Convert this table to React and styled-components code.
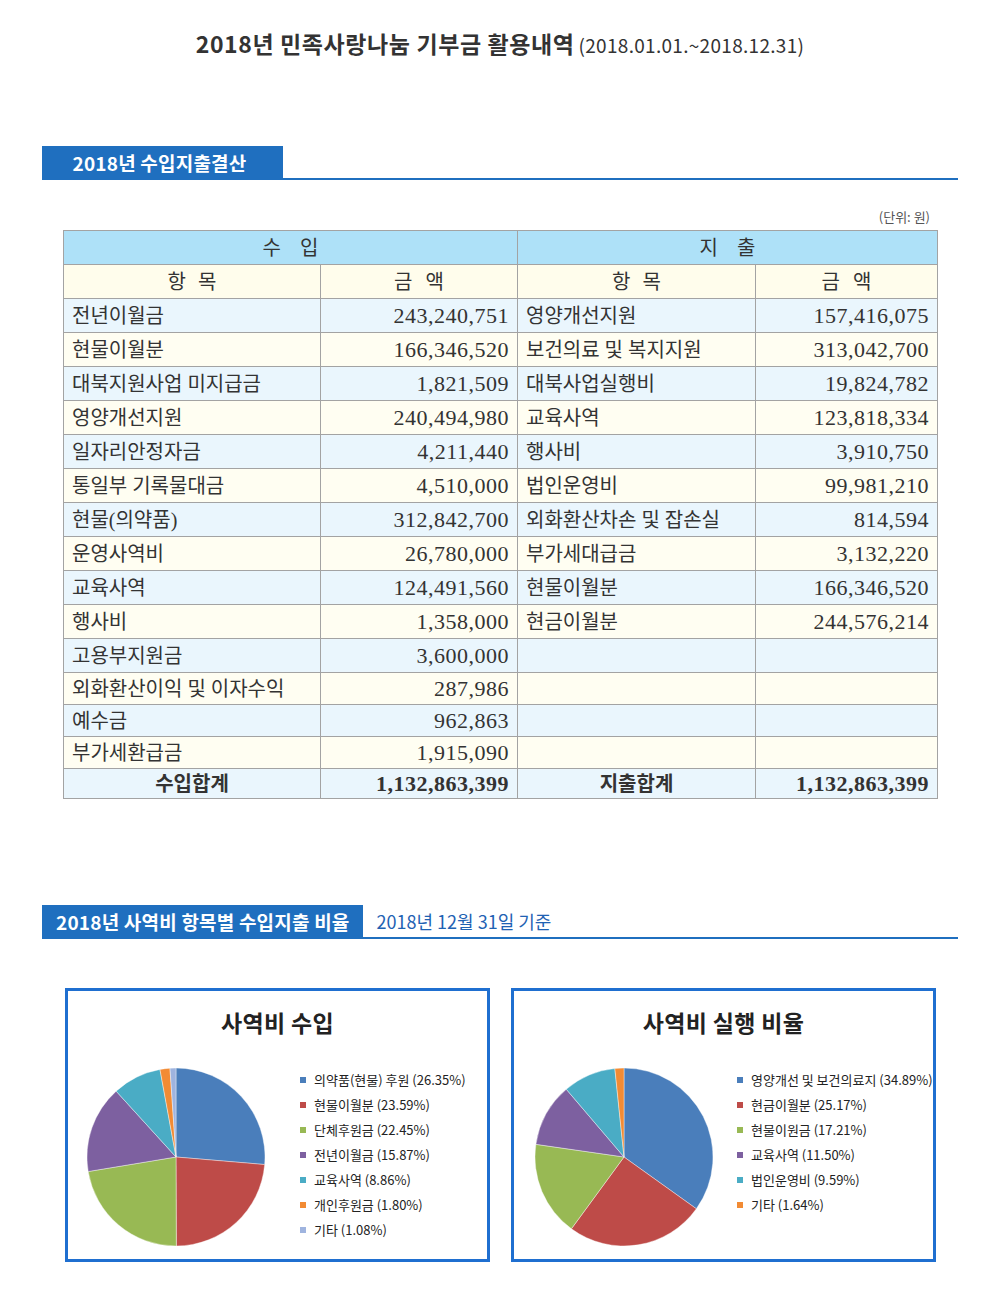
import React from "react";
import styled, { createGlobalStyle } from "styled-components";

const GlobalStyle = createGlobalStyle`
  html, body { margin: 0; padding: 0; background: #fff; }
  body { font-family: "Noto Sans CJK KR", "Noto Sans", sans-serif; color: #333; }
`;

const Page = styled.div`
  width: 1000px;
  height: 1295px;
  padding-top: 28px;
  box-sizing: border-box;
  background: #fff;
`;

const Title = styled.h1`
  margin: 0;
  height: 30px;
  text-align: center;
  font-size: 23px;
  line-height: 30px;
  font-weight: 700;
  color: #333;
  letter-spacing: 0.6px;
  white-space: nowrap;
`;

const TitleDate = styled.span`
  font-size: 19px;
  font-weight: 400;
  margin-left: 4px;
  letter-spacing: 0.3px;
  line-height: 1;
  vertical-align: baseline;
`;

const SectionHead = styled.div`
  display: flex;
  align-items: center;
  margin: ${(p) => p.$top}px 42px 0;
  border-bottom: 2px solid #1f6fbf;
`;

const SectionLabel = styled.div`
  height: 32px;
  width: ${(p) => (p.$width ? `${p.$width}px` : "auto")};
  padding: ${(p) => (p.$width ? "0 6px 0 0" : "0 13px 0 14px")};
  box-sizing: border-box;
  display: flex;
  align-items: center;
  justify-content: center;
  background: #1f6fbf;
  color: #fff;
  font-size: 19px;
  font-weight: 700;
  letter-spacing: 0.2px;
  white-space: nowrap;
`;

const SectionNote = styled.div`
  margin-left: 14px;
  color: #1f62b3;
  font-size: 18px;
  white-space: nowrap;
`;

const Unit = styled.div`
  margin: 29px 70px 0 0;
  text-align: right;
  font-size: 13px;
  line-height: 16px;
  color: #555;
`;

const TableWrap = styled.div`
  margin: 5px 0 0 63px;
`;

const Table = styled.table`
  width: 874px;
  border-collapse: collapse;
  table-layout: fixed;
  font-family: "Liberation Serif", "Noto Sans CJK KR", serif;
  color: #333;
`;

const Row = styled.tr`
  background: ${(p) =>
    p.$tone === "group" ? "#aee1f8" : p.$tone === "head" ? "#fffdec" : p.$tone === "blue" ? "#eaf6fd" : "#fffef2"};
`;

const Cell = styled.td`
  border: 1px solid #a3a3a3;
  height: ${(p) => p.$h}px;
  padding: 0 8px;
  box-sizing: border-box;
  font-size: ${(p) => (p.$num ? "22px" : "20px")};
  letter-spacing: ${(p) => (p.$num ? "0.5px" : "0")};
  text-align: ${(p) => (p.$num ? "right" : p.$center ? "center" : "left")};
  font-weight: ${(p) => (p.$bold ? 700 : 400)};
  word-spacing: ${(p) => (p.$ws ? `${p.$ws}px` : "normal")};
  white-space: nowrap;
  line-height: 1;
`;

const ChartRow = styled.div`
  display: flex;
  gap: 21px;
  margin: 49px 0 0 65px;
`;

const ChartBox = styled.div`
  width: 425px;
  height: 274px;
  box-sizing: border-box;
  border: 3px solid #1f6fd0;
  padding: 16px 0 0 ${(p) => p.$padLeft}px;
`;

const ChartTitle = styled.div`
  margin-left: -${(p) => p.$padLeft}px;
  text-align: center;
  font-size: 23px;
  line-height: 30px;
  font-weight: 700;
  color: #222;
  letter-spacing: 0.3px;
`;

const ChartBody = styled.div`
  display: flex;
  align-items: flex-start;
  margin-top: 30px;
`;

const Legend = styled.ul`
  list-style: none;
  margin: 0 0 0 ${(p) => p.$gap}px;
  padding: 0;
`;

const LegendItem = styled.li`
  display: flex;
  align-items: center;
  height: 25px;
  font-size: 13px;
  color: #222;
  white-space: nowrap;
`;

const Swatch = styled.span`
  width: 6px;
  height: 6px;
  background: ${(p) => p.$color};
  margin-right: 8px;
  flex: none;
`;

const income = [
  ["전년이월금", "243,240,751"],
  ["현물이월분", "166,346,520"],
  ["대북지원사업 미지급금", "1,821,509"],
  ["영양개선지원", "240,494,980"],
  ["일자리안정자금", "4,211,440"],
  ["통일부 기록물대금", "4,510,000"],
  ["현물(의약품)", "312,842,700"],
  ["운영사역비", "26,780,000"],
  ["교육사역", "124,491,560"],
  ["행사비", "1,358,000"],
  ["고용부지원금", "3,600,000"],
  ["외화환산이익 및 이자수익", "287,986"],
  ["예수금", "962,863"],
  ["부가세환급금", "1,915,090"],
];

const expense = [
  ["영양개선지원", "157,416,075"],
  ["보건의료 및 복지지원", "313,042,700"],
  ["대북사업실행비", "19,824,782"],
  ["교육사역", "123,818,334"],
  ["행사비", "3,910,750"],
  ["법인운영비", "99,981,210"],
  ["외화환산차손 및 잡손실", "814,594"],
  ["부가세대급금", "3,132,220"],
  ["현물이월분", "166,346,520"],
  ["현금이월분", "244,576,214"],
];

const C = {
  blue: "#4a7ebb",
  red: "#be4b48",
  green: "#98b954",
  purple: "#7d60a0",
  teal: "#4aacc5",
  orange: "#f28b34",
  lav: "#9fb4df",
};

const incomePie = [
  ["의약품(현물) 후원 (26.35%)", 26.35, C.blue],
  ["현물이월분 (23.59%)", 23.59, C.red],
  ["단체후원금 (22.45%)", 22.45, C.green],
  ["전년이월금 (15.87%)", 15.87, C.purple],
  ["교육사역 (8.86%)", 8.86, C.teal],
  ["개인후원금 (1.80%)", 1.8, C.orange],
  ["기타 (1.08%)", 1.08, C.lav],
];

const expensePie = [
  ["영양개선 및 보건의료지 (34.89%)", 34.89, C.blue],
  ["현금이월분 (25.17%)", 25.17, C.red],
  ["현물이원금 (17.21%)", 17.21, C.green],
  ["교육사역 (11.50%)", 11.5, C.purple],
  ["법인운영비 (9.59%)", 9.59, C.teal],
  ["기타 (1.64%)", 1.64, C.orange],
];

function Pie({ data }) {
  const cx = 90, cy = 90, r = 89;
  let acc = 0;
  const total = data.reduce((s, d) => s + d[1], 0);
  return (
    <svg width="180" height="180" viewBox="0 0 180 180" style={{ flex: "none" }}>
      {data.map(([label, v, color]) => {
        const a0 = (acc / total) * Math.PI * 2 - Math.PI / 2;
        acc += v;
        const a1 = (acc / total) * Math.PI * 2 - Math.PI / 2;
        const x0 = cx + r * Math.cos(a0), y0 = cy + r * Math.sin(a0);
        const x1 = cx + r * Math.cos(a1), y1 = cy + r * Math.sin(a1);
        const large = a1 - a0 > Math.PI ? 1 : 0;
        return (
          <path
            key={label}
            d={`M${cx},${cy} L${x0.toFixed(2)},${y0.toFixed(2)} A${r},${r} 0 ${large} 1 ${x1.toFixed(2)},${y1.toFixed(2)} Z`}
            fill={color}
            stroke="#fff"
            strokeWidth="0.4"
          />
        );
      })}
    </svg>
  );
}

function Chart({ title, data, padLeft, gap }) {
  return (
    <ChartBox $padLeft={padLeft}>
      <ChartTitle $padLeft={padLeft}>{title}</ChartTitle>
      <ChartBody>
        <Pie data={data} />
        <Legend $gap={gap}>
          {data.map(([label, , color]) => (
            <LegendItem key={label}>
              <Swatch $color={color} />
              {label}
            </LegendItem>
          ))}
        </Legend>
      </ChartBody>
    </ChartBox>
  );
}

export default function App() {
  const rows = income.map((inc, i) => {
    const exp = expense[i] || ["", ""];
    const h = i < 11 ? 34 : 32;
    return (
      <Row key={i} $tone={i % 2 === 0 ? "blue" : "cream"}>
        <Cell $h={h}>{inc[0]}</Cell>
        <Cell $h={h} $num>{inc[1]}</Cell>
        <Cell $h={h}>{exp[0]}</Cell>
        <Cell $h={h} $num>{exp[1]}</Cell>
      </Row>
    );
  });

  return (
    <Page>
      <GlobalStyle />
      <Title>
        2018년 민족사랑나눔 기부금 활용내역<TitleDate>(2018.01.01.~2018.12.31)</TitleDate>
      </Title>

      <SectionHead $top={88}>
        <SectionLabel $width={241}>2018년 수입지출결산</SectionLabel>
      </SectionHead>

      <Unit>(단위: 원)</Unit>
      <TableWrap>
        <Table>
          <colgroup>
            <col style={{ width: 257 }} />
            <col style={{ width: 197 }} />
            <col style={{ width: 238 }} />
            <col style={{ width: 182 }} />
          </colgroup>
          <tbody>
            <Row $tone="group">
              <Cell $h={34} colSpan={2} $center $ws={14}>수 입</Cell>
              <Cell $h={34} colSpan={2} $center $ws={14}>지 출</Cell>
            </Row>
            <Row $tone="head">
              <Cell $h={34} $center $ws={7}>항 목</Cell>
              <Cell $h={34} $center $ws={8}>금 액</Cell>
              <Cell $h={34} $center $ws={7}>항 목</Cell>
              <Cell $h={34} $center $ws={8}>금 액</Cell>
            </Row>
            {rows}
            <Row $tone="blue">
              <Cell $h={30} $center $bold>수입합계</Cell>
              <Cell $h={30} $num $bold>1,132,863,399</Cell>
              <Cell $h={30} $center $bold>지출합계</Cell>
              <Cell $h={30} $num $bold>1,132,863,399</Cell>
            </Row>
          </tbody>
        </Table>
      </TableWrap>

      <SectionHead $top={106}>
        <SectionLabel>2018년 사역비 항목별 수입지출 비율</SectionLabel>
        <SectionNote>2018년 12월 31일 기준</SectionNote>
      </SectionHead>

      <ChartRow>
        <Chart title="사역비 수입" data={incomePie} padLeft={18} gap={34} />
        <Chart title="사역비 실행 비율" data={expensePie} padLeft={20} gap={23} />
      </ChartRow>
    </Page>
  );
}
